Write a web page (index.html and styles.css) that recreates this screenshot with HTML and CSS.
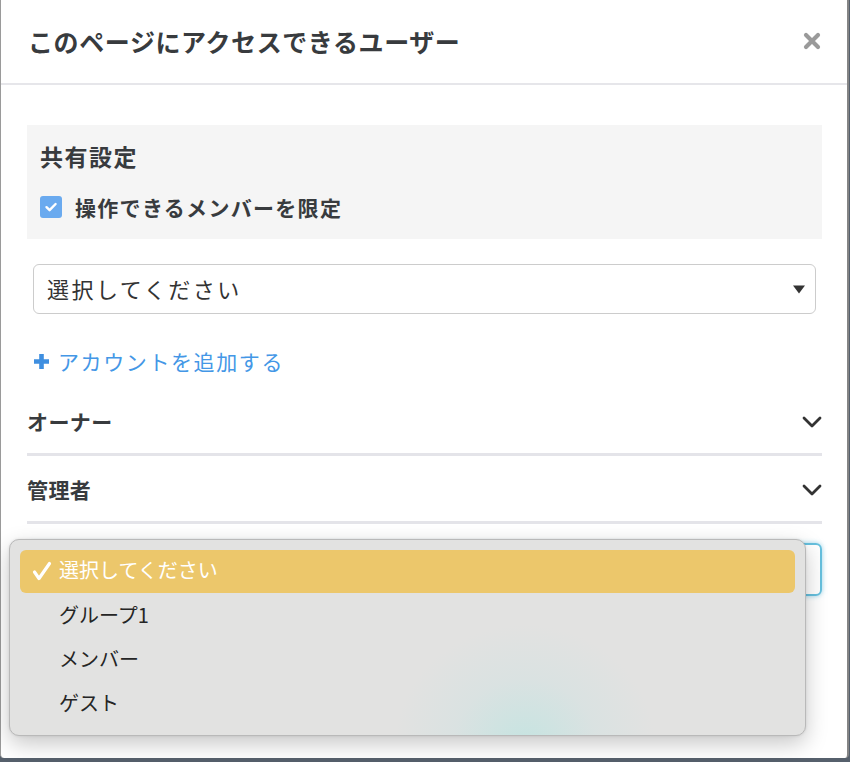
FILE: index.html
```html
<!DOCTYPE html>
<html lang="ja">
<head>
<meta charset="utf-8">
<title>共有設定</title>
<link rel="stylesheet" href="styles.css">
</head>
<body>
<div class="modal">
  <div class="modal-header">
    <h1 class="modal-title">このページにアクセスできるユーザー</h1>
    <svg class="close" width="18" height="18" viewBox="0 0 18 18"><path d="M3 3 L15 15 M15 3 L3 15" stroke="#9a9a9a" stroke-width="4.2" stroke-linecap="round"/></svg>
  </div>
  <div class="modal-body">
    <div class="share-box">
      <div class="share-title">共有設定</div>
      <label class="check-row">
        <span class="checkbox"><svg width="22" height="22" viewBox="0 0 22 22"><path d="M6.5 11.2 L9.6 14.2 L15.6 8" fill="none" stroke="#fff" stroke-width="2.4" stroke-linecap="round" stroke-linejoin="round"/></svg></span>
        <span class="check-label">操作できるメンバーを限定</span>
      </label>
    </div>
    <div class="select">
      <span class="select-text">選択してください</span>
      <svg class="caret" width="12" height="9" viewBox="0 0 12 9"><path d="M0 0.5 H12 L6 8.5 Z" fill="#333"/></svg>
    </div>
    <div class="add-link">
      <svg class="plus" width="17" height="17" viewBox="0 0 17 17"><path d="M8.5 1 V16 M1 8.5 H16" stroke="#3f8fe0" stroke-width="4.6"/></svg>
      <span>アカウントを追加する</span>
    </div>
    <div class="acc-item">
      <span class="acc-label">オーナー</span>
      <svg class="chev" width="20" height="12" viewBox="0 0 20 12"><path d="M2 2 L10 10 L18 2" fill="none" stroke="#333" stroke-width="2.8" stroke-linecap="round" stroke-linejoin="round"/></svg>
    </div>
    <div class="acc-item">
      <span class="acc-label">管理者</span>
      <svg class="chev" width="20" height="12" viewBox="0 0 20 12"><path d="M2 2 L10 10 L18 2" fill="none" stroke="#333" stroke-width="2.8" stroke-linecap="round" stroke-linejoin="round"/></svg>
    </div>
    <div class="select focused"></div>
  </div>

  <div class="popup">
    <div class="opt selected">
      <svg class="tick" width="20" height="20" viewBox="0 0 20 20"><path d="M2.5 11 L7 17.5 L17.5 2.5" fill="none" stroke="#fff" stroke-width="3.2" stroke-linecap="round" stroke-linejoin="round"/></svg>
      <span>選択してください</span>
    </div>
    <div class="opt"><span>グループ1</span></div>
    <div class="opt"><span>メンバー</span></div>
    <div class="opt"><span>ゲスト</span></div>
  </div>
</div>
</body>
</html>
```
FILE: styles.css
```css
html, body {
  margin: 0;
  padding: 0;
}
body {
  width: 850px;
  height: 762px;
  background: #56606c;
  font-family: "Noto Sans CJK JP", "Noto Sans", sans-serif;
  color: #333;
  overflow: hidden;
}
.modal {
  position: relative;
  width: 849px;
  height: 758px;
  background: #fff;
  border-left: 1px solid #9a9a9a;
  border-right: 2px solid #858585;
  border-radius: 0 0 4px 4px;
  box-sizing: border-box;
}
.modal-header {
  display: flex;
  align-items: center;
  justify-content: space-between;
  height: 85px;
  padding: 0 26px 0 27px;
  border-bottom: 2px solid #e6e6ea;
  box-sizing: border-box;
}
.modal-title {
  margin: 0;
  font-size: 25px;
  font-weight: 700;
  color: #383b3e;
  line-height: 32px;
  margin-top: -1px;
  letter-spacing: 0.6px;
}
.close {
  margin-top: -2px;
}
.modal-body {
  padding: 40px 25px 0 26px;
}
.share-box {
  background: #f5f5f5;
  padding: 15px 13px 17px;
}
.share-title {
  font-size: 23px;
  font-weight: 700;
  line-height: 32px;
  color: #383b3e;
  letter-spacing: 1.5px;
}
.check-row {
  display: flex;
  align-items: center;
  margin-top: 20px;
  height: 30px;
}
.checkbox {
  width: 22px;
  height: 22px;
  background: #6aaaef;
  border-radius: 3px;
  display: flex;
}
.check-label {
  margin-left: 13px;
  font-size: 21px;
  font-weight: 700;
  color: #383b3e;
  letter-spacing: 1.3px;
}
.select {
  display: flex;
  align-items: center;
  justify-content: space-between;
  height: 50px;
  margin: 25px 6px 0;
  padding: 0 10px 0 13px;
  border: 1px solid #cccccc;
  border-radius: 6px;
  box-sizing: border-box;
}
.select-text {
  font-size: 22px;
  letter-spacing: 2.5px;
  color: #333;
  margin-top: -2px;
}
.add-link {
  display: flex;
  align-items: center;
  margin-top: 32px;
  margin-left: 6px;
  height: 30px;
  color: #4497e6;
  font-size: 21px;
  letter-spacing: 1.6px;
}
.plus {
  margin-right: 8px;
}
.acc-item {
  display: flex;
  align-items: center;
  justify-content: space-between;
  height: 68px;
  padding: 18px 0 17px;
  border-bottom: 3px solid #e4e4e9;
  box-sizing: border-box;
}
.add-link + .acc-item {
  margin-top: 12px;
}
.acc-label {
  font-size: 21px;
  font-weight: 700;
  color: #383b3e;
  line-height: 30px;
  letter-spacing: 0.4px;
}
.chev {
  margin-right: 0;
  margin-top: 2px;
}
.select.focused {
  margin: 19px 0 0;
  height: 53px;
  border: 2px solid #66c0de;
  box-shadow: 0 0 5px rgba(90, 185, 220, 0.6);
}
.popup {
  position: absolute;
  left: 8px;
  top: 539px;
  width: 797px;
  height: 197px;
  box-sizing: border-box;
  padding: 10px 10px 10px 10px;
  border: 1px solid #b9b9b9;
  border-radius: 10px;
  background:
    radial-gradient(ellipse 130px 120px at 515px 205px, rgba(196, 228, 225, 0.95), rgba(210, 226, 226, 0.5) 55%, rgba(226, 226, 225, 0) 100%),
    #e2e2e1;
  box-shadow: 0 8px 22px rgba(0, 0, 0, 0.22), 0 0 3px rgba(0, 0, 0, 0.1);
}
.opt {
  position: relative;
  display: flex;
  align-items: center;
  height: 44px;
  padding-left: 39px;
  padding-bottom: 4px;
  box-sizing: border-box;
  font-size: 20px;
  color: #252525;
  border-radius: 6px;
}
.opt.selected {
  background: #ecc76b;
  color: #fff;
  height: 43px;
  margin-bottom: 1px;
}
.tick {
  position: absolute;
  left: 12px;
  top: 11px;
}
```
